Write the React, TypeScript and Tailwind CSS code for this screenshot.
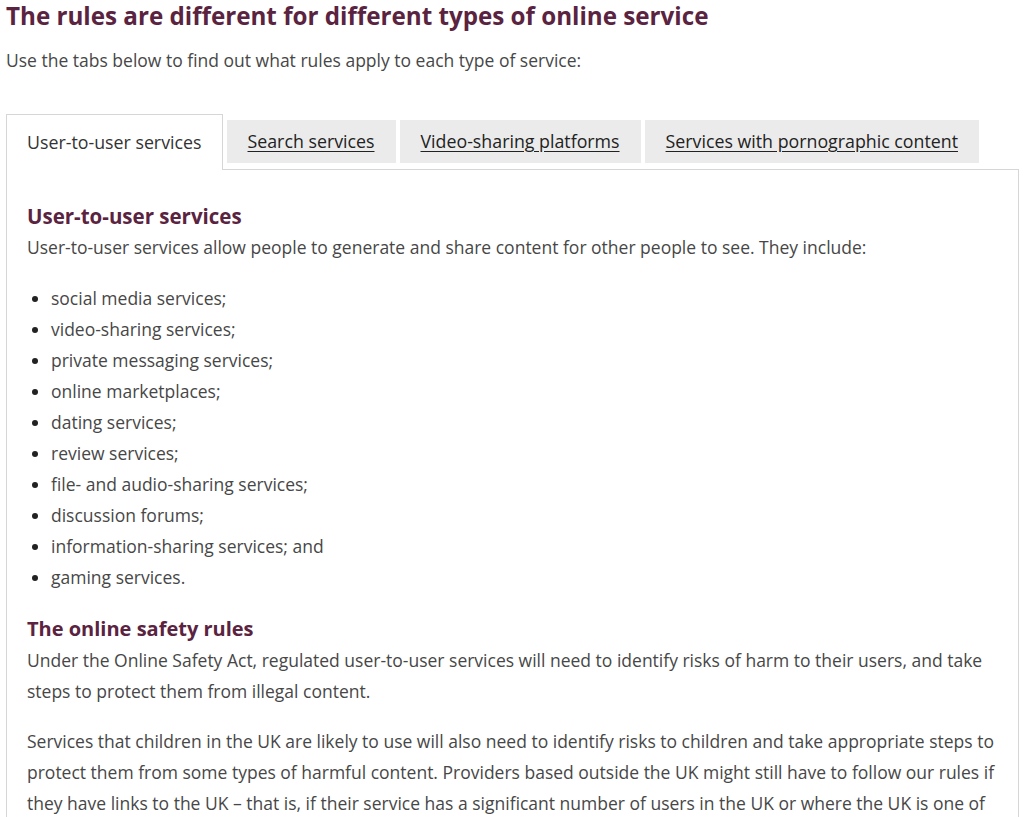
import { useState } from 'react'

const tabs = [
  'User-to-user services',
  'Search services',
  'Video-sharing platforms',
  'Services with pornographic content',
]

const services = [
  'social media services;',
  'video-sharing services;',
  'private messaging services;',
  'online marketplaces;',
  'dating services;',
  'review services;',
  'file- and audio-sharing services;',
  'discussion forums;',
  'information-sharing services; and',
  'gaming services.',
]

export default function App() {
  const [active, setActive] = useState(0)

  return (
    <div className="min-h-screen bg-white pl-[6px] pr-[5px] text-[#474747] font-['Open_Sans','Noto_Sans',sans-serif]">
      <h1 className="text-[24.2px] font-bold leading-[32px] text-[#5a2340]">
        The rules are different for different types of online service
      </h1>
      <p className="mt-[16px] text-[17.5px] leading-[24px]">
        Use the tabs below to find out what rules apply to each type of service:
      </p>

      {/* Tabs */}
      <div className="mt-[42px] flex items-start">
        {tabs.map((tab, i) =>
          i === active ? (
            <button
              key={tab}
              onClick={() => setActive(i)}
              className="relative z-10 -mb-px h-[56px] border border-b-0 border-[#d6d6d6] bg-white px-[20px] text-[17.8px] text-[#333]"
            >
              {tab}
            </button>
          ) : (
            <button
              key={tab}
              onClick={() => setActive(i)}
              className="ml-[4px] mt-[6px] h-[43px] bg-[#ebebeb] px-[21px] text-[17.8px] text-[#222] underline underline-offset-[3px]"
            >
              {tab}
            </button>
          ),
        )}
      </div>

      {/* Panel */}
      <div className="border border-[#d6d6d6] px-[20px] pt-[31px] pb-[24px]">
        <h2 className="text-[20.5px] font-bold leading-[31px] text-[#5a2340]">User-to-user services</h2>
        <p className="text-[17.5px] leading-[31px]">
          User-to-user services allow people to generate and share content for other people to see. They include:
        </p>
        <ul className="mt-[20px] list-disc pl-[24px] text-[17.5px] leading-[31px] marker:text-[#222]">
          {services.map((s) => (
            <li key={s}>{s}</li>
          ))}
        </ul>

        <h2 className="mt-[20px] text-[20px] font-bold leading-[31px] text-[#5a2340]">The online safety rules</h2>
        <p className="mt-[1px] text-[17.5px] leading-[31px]">
          Under the Online Safety Act, regulated user-to-user services will need to identify risks of harm to their
          users, and take steps to protect them from illegal content.
        </p>
        <p className="mt-[19px] text-[17.5px] leading-[31px]">
          Services that children in the UK are likely to use will also need to identify risks to children and take
          appropriate steps to protect them from some types of harmful content. Providers based outside the UK might
          still have to follow our rules if they have links to the UK – that is, if their service has a significant
          number of users in the UK or where the UK is one of their target markets.
        </p>
      </div>
    </div>
  )
}
